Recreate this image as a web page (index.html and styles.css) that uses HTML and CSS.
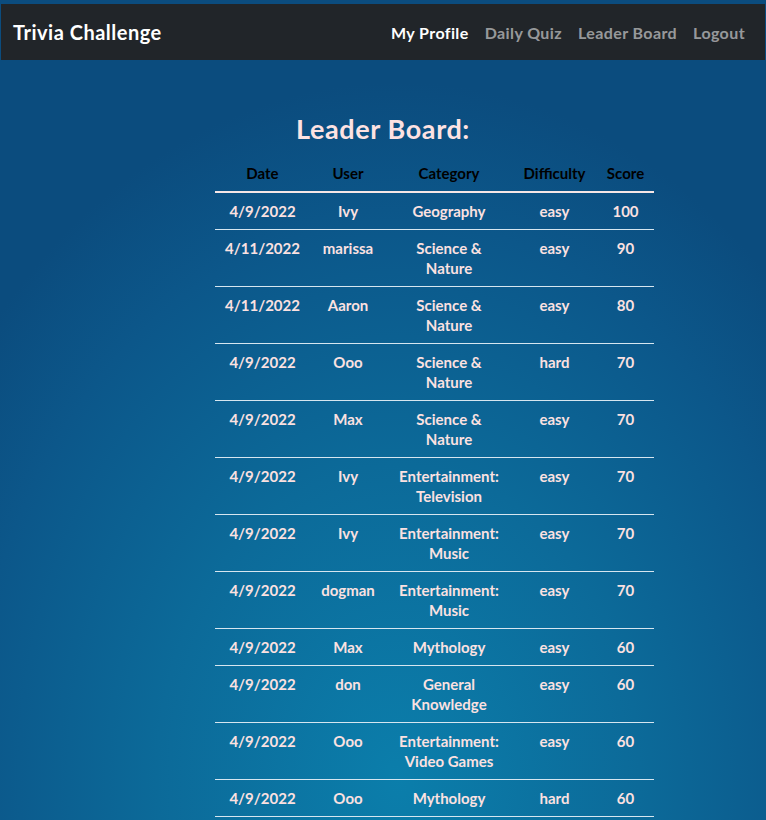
FILE: index.html
```html
<!DOCTYPE html>
<html lang="en">
<head>
<meta charset="utf-8">
<title>Trivia Challenge</title>
<link rel="stylesheet" href="styles.css">
</head>
<body>
<nav class="navbar">
  <a class="brand" href="#">Trivia Challenge</a>
  <ul class="nav-links">
    <li><a class="nav-link active" href="#">My Profile</a></li>
    <li><a class="nav-link" href="#">Daily Quiz</a></li>
    <li><a class="nav-link" href="#">Leader Board</a></li>
    <li><a class="nav-link" href="#">Logout</a></li>
  </ul>
</nav>
<main class="content">
  <h1 class="title">Leader Board:</h1>
  <table class="board">
    <colgroup>
      <col class="c-date"><col class="c-user"><col class="c-cat"><col class="c-diff"><col class="c-score">
    </colgroup>
    <thead>
      <tr><th>Date</th><th>User</th><th>Category</th><th>Difficulty</th><th>Score</th></tr>
    </thead>
    <tbody>
      <tr><td>4/9/2022</td><td>Ivy</td><td>Geography</td><td>easy</td><td>100</td></tr>
      <tr><td>4/11/2022</td><td>marissa</td><td>Science &amp; Nature</td><td>easy</td><td>90</td></tr>
      <tr><td>4/11/2022</td><td>Aaron</td><td>Science &amp; Nature</td><td>easy</td><td>80</td></tr>
      <tr><td>4/9/2022</td><td>Ooo</td><td>Science &amp; Nature</td><td>hard</td><td>70</td></tr>
      <tr><td>4/9/2022</td><td>Max</td><td>Science &amp; Nature</td><td>easy</td><td>70</td></tr>
      <tr><td>4/9/2022</td><td>Ivy</td><td>Entertainment: Television</td><td>easy</td><td>70</td></tr>
      <tr><td>4/9/2022</td><td>Ivy</td><td>Entertainment: Music</td><td>easy</td><td>70</td></tr>
      <tr><td>4/9/2022</td><td>dogman</td><td>Entertainment: Music</td><td>easy</td><td>70</td></tr>
      <tr><td>4/9/2022</td><td>Max</td><td>Mythology</td><td>easy</td><td>60</td></tr>
      <tr><td>4/9/2022</td><td>don</td><td>General Knowledge</td><td>easy</td><td>60</td></tr>
      <tr><td>4/9/2022</td><td>Ooo</td><td>Entertainment: Video Games</td><td>easy</td><td>60</td></tr>
      <tr><td>4/9/2022</td><td>Ooo</td><td>Mythology</td><td>hard</td><td>60</td></tr>
    </tbody>
  </table>
</main>
</body>
</html>
```

FILE: styles.css
```css
html, body {
  margin: 0;
  padding: 0;
  height: 100%;
}
body {
  font-family: "Lato", "Noto Sans", sans-serif;
  font-weight: 700;
  background: radial-gradient(ellipse 70% 85% at 52% 95%, #0b7eab 0%, #0c6a99 45%, #0c578a 80%, #0b4c7e 100%);
  background-attachment: fixed;
  color: #fbe1e1;
  overflow: hidden;
}
.navbar {
  margin: 4px 1px 0 1px;
  height: 56px;
  background: #212529;
  display: flex;
  align-items: center;
  justify-content: space-between;
  padding: 0 20px 0 12px;
  box-sizing: border-box;
}
.brand {
  color: #ffffff;
  text-decoration: none;
  font-size: 20px;
  font-weight: 700;
  letter-spacing: 0.5px;
}
.nav-links {
  list-style: none;
  margin: 0;
  padding: 0;
  display: flex;
  gap: 16px;
}
.nav-link {
  color: rgba(255, 255, 255, 0.55);
  text-decoration: none;
  font-size: 16px;
  font-weight: 700;
  letter-spacing: 0.4px;
}
.nav-link.active {
  color: #ffffff;
}
.content {
  padding-top: 53px;
}
.title {
  margin: 0 0 10px 0;
  text-align: center;
  font-size: 27px;
  font-weight: 700;
  color: #fde2e2;
  line-height: 32px;
  letter-spacing: 0.6px;
}
.board {
  margin-left: 215px;
  width: 439px;
  table-layout: fixed;
  border-collapse: collapse;
  text-align: center;
  font-size: 15px;
}
.c-date { width: 95px; }
.c-user { width: 76px; }
.c-cat { width: 126px; }
.c-diff { width: 85px; }
.c-score { width: 57px; }
.board th {
  color: #000000;
  font-size: 15px;
  font-weight: 700;
  padding: 8px 2px;
  line-height: 20px;
  border-bottom: 2px solid #f6e6e6;
  white-space: nowrap;
}
.board td {
  padding: 8px 8px;
  line-height: 20px;
  vertical-align: top;
  border-bottom: 1px solid #d6e6f0;
  color: #fbe1e1;
}
.board td:first-child,
.board td:nth-child(2) {
  padding-left: 2px;
  padding-right: 2px;
}
```
